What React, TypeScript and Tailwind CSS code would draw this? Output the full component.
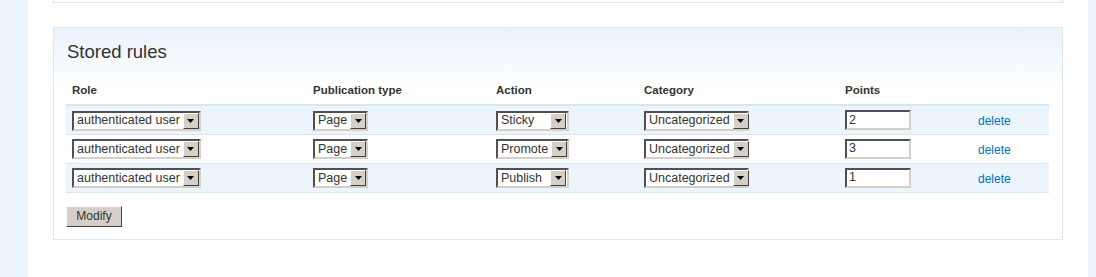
import React from "react";

const rules = [
  { action: "Sticky", points: "2" },
  { action: "Promote", points: "3" },
  { action: "Publish", points: "1" },
];

function Select({ value, width }: { value: string; width: string }) {
  return (
    <div
      className={`inline-flex h-[20px] items-center justify-between border-2 border-t-[#505050] border-l-[#505050] border-r-[#d4d0c8] border-b-[#d4d0c8] bg-white pl-[3px] pr-[1px] align-middle ${width}`}
    >
      <span className="whitespace-nowrap text-[12.5px] leading-none text-[#333]">{value}</span>
      <span className="ml-[3px] flex h-[16px] w-[16px] shrink-0 items-center justify-center border border-t-white border-l-white border-r-[#404040] border-b-[#404040] bg-[#d4d0c8]">
        <svg width="7" height="4" viewBox="0 0 7 4">
          <path d="M0 0h7L3.5 4z" fill="#000" />
        </svg>
      </span>
    </div>
  );
}

export default function App() {
  return (
    <div className="flex h-[277px] w-[1096px] bg-[#edf5fc] font-['Liberation_Sans',Arial,sans-serif]">
      <div className="ml-[28px] w-[1060px] bg-white px-[25px]">
        <div className="h-[3px] border-x border-b border-[#d9e7f2]" />

        <div className="mt-[24px] h-[213px] border border-[#d9e7f2] bg-gradient-to-b from-[#e9f2fa] to-white bg-[length:100%_60px] bg-no-repeat px-[12px]">
          <h2 className="pl-[1px] pt-[13px] text-[18.5px] leading-[22px] text-[#333]">Stored rules</h2>

          <table className="mt-[15px] w-[983px] border-collapse text-left">
            <thead>
              <tr className="h-[27px] border-b-2 border-[#d3e7f4]">
                <th className="w-[241px] pl-[6px] text-[11.5px] font-bold text-[#333]">Role</th>
                <th className="w-[183px] pl-[6px] text-[11.5px] font-bold text-[#333]">Publication type</th>
                <th className="w-[148px] pl-[6px] text-[11.5px] font-bold text-[#333]">Action</th>
                <th className="w-[201px] pl-[6px] text-[11.5px] font-bold text-[#333]">Category</th>
                <th className="w-[133px] pl-[6px] text-[11.5px] font-bold text-[#333]">Points</th>
                <th className="pl-[6px]" />
              </tr>
            </thead>
            <tbody>
              {rules.map((r, i) => (
                <tr
                  key={i}
                  className={`h-[29px] border-b border-[#d3e7f4] ${i % 2 === 0 ? "bg-[#edf5fc]" : "bg-white"}`}
                >
                  <td className="pl-[6px]">
                    <Select value="authenticated user" width="w-[129px]" />
                  </td>
                  <td className="pl-[6px]">
                    <Select value="Page" width="w-[55px]" />
                  </td>
                  <td className="pl-[6px]">
                    <Select value={r.action} width="w-[73px]" />
                  </td>
                  <td className="pl-[6px]">
                    <Select value="Uncategorized" width="w-[105px]" />
                  </td>
                  <td className="pl-[6px]">
                    <div className="flex h-[20px] w-[66px] items-center border-2 border-t-[#505050] border-l-[#505050] border-r-[#d4d0c8] border-b-[#d4d0c8] bg-white pl-[2px] text-[12.5px] leading-none text-[#333]">
                      {r.points}
                    </div>
                  </td>
                  <td className="pl-[6px]">
                    <a href="#" className="text-[12px] text-[#0073ba]">
                      delete
                    </a>
                  </td>
                </tr>
              ))}
            </tbody>
          </table>

          <button className="mt-[13px] h-[21px] w-[56px] border border-t-white border-l-white border-r-[#404040] border-b-[#404040] bg-[#d4d0c8] text-[12px] text-[#333]">
            Modify
          </button>
        </div>
      </div>
      <div className="flex-1 bg-[#edf5fc]" />
    </div>
  );
}
